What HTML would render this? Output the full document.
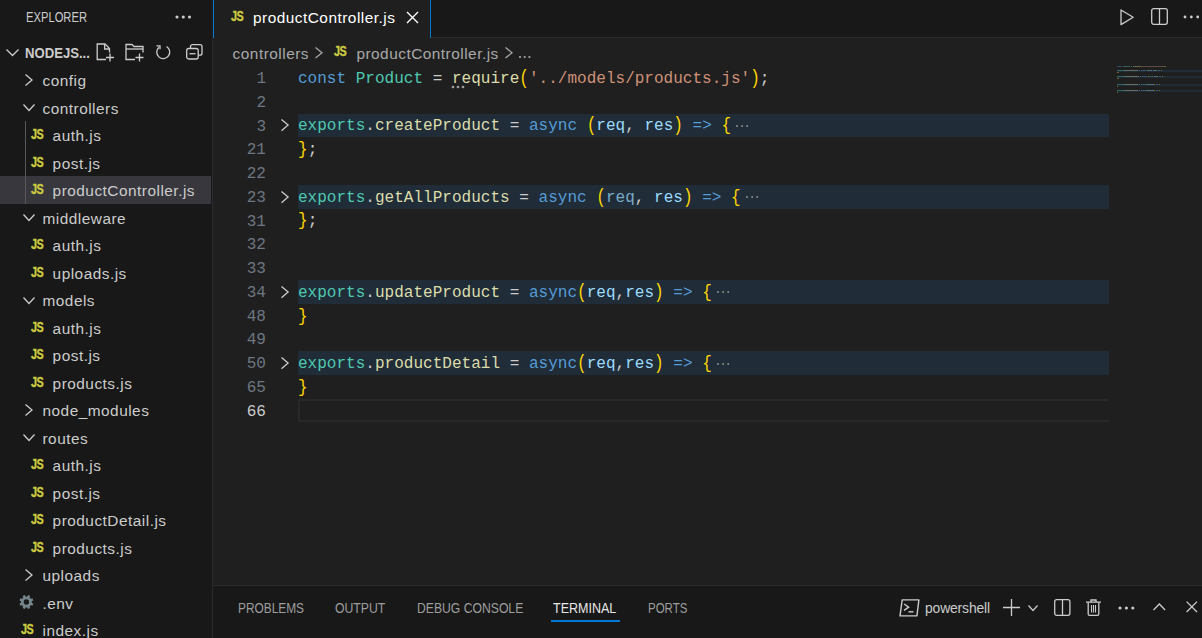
<!DOCTYPE html><html><head><meta charset="utf-8"><style>
*{margin:0;padding:0;box-sizing:border-box}
html,body{width:1202px;height:638px;overflow:hidden;background:#1f1f1f;font-family:"Liberation Sans",sans-serif}
.a{position:absolute}
.t{position:absolute;white-space:pre;color:#cccccc;font-size:15.4px;letter-spacing:0.49px;line-height:20px}
.js{position:absolute;font-weight:700;font-size:14.2px;color:#cbcb41;line-height:14px;letter-spacing:-0.6px;white-space:pre;transform:scaleX(0.76);transform-origin:0 0;-webkit-text-stroke:0.4px #cbcb41}
.cap{position:absolute;white-space:pre;transform-origin:0 0;line-height:14px}
.code{position:absolute;left:298px;white-space:pre;font-family:"Liberation Mono",monospace;font-size:16.04px;line-height:24px;color:#cccccc}
.ln{position:absolute;left:216px;width:50px;text-align:right;font-family:"Liberation Mono",monospace;font-size:16.04px;line-height:24px;color:#6e7681;white-space:pre}
.br{display:inline-block;transform:scaleY(1.22)}.bc{display:inline-block;transform:translateY(-0.5px) scaleY(1.16)}.k{color:#569cd6}.c{color:#4ec9b0}.f{color:#dcdcaa}.s{color:#ce9178}.v{color:#9cdcfe}.u{color:#9cdcfe;opacity:.72}.b{color:#ffd700}.p{color:#cccccc}
svg{position:absolute;overflow:visible}
.mm{position:absolute;height:1.2px}
</style></head><body>
<div class="a" style="left:0;top:0;width:212px;height:638px;background:#181818"></div>
<div class="a" style="left:212px;top:37px;width:1px;height:601px;background:#2b2b2b"></div>
<div class="a" style="left:213px;top:0;width:989px;height:37px;background:#181818"></div>
<div class="a" style="left:431px;top:37px;width:771px;height:1px;background:#2b2b2b"></div>
<div class="a" style="left:213px;top:0;width:218px;height:38px;background:#1f1f1f;border-left:1px solid #0078d4;border-right:1px solid #0078d4"></div>
<div class="a" style="left:213px;top:585px;width:989px;height:1px;background:#2b2b2b"></div>
<div class="a" style="left:213px;top:586px;width:989px;height:52px;background:#181818"></div>
<div class="cap" style="left:26px;top:10px;font-size:14px;color:#cccccc;transform:scaleX(0.8)">EXPLORER</div>
<svg style="left:174.7px;top:14.9px" width="16.5" height="4"><circle cx="2.0" cy="2" r="1.55" fill="#cccccc"/><circle cx="8.25" cy="2" r="1.55" fill="#cccccc"/><circle cx="14.5" cy="2" r="1.55" fill="#cccccc"/></svg>
<svg style="left:6px;top:49px" width="13" height="7"><path d="M0.5 0.5 L6.5 6.5 L12.5 0.5" fill="none" stroke="#cccccc" stroke-width="1.3"/></svg>
<div class="cap" style="left:25px;top:45.5px;font-size:14.5px;font-weight:700;color:#cccccc;transform:scaleX(0.905)">NODEJS...</div>
<svg style="left:96px;top:43px" width="19" height="19"><path d="M10 16.5 H1.2 V1 H9 L13.5 5.5 V9.5" fill="none" stroke="#cccccc" stroke-width="1.3"/><path d="M8.6 1 V6 H13.5" fill="none" stroke="#cccccc" stroke-width="1.3"/><path d="M14 10.5 V18.5 M10 14.5 H18" stroke="#cccccc" stroke-width="1.3"/></svg>
<svg style="left:125px;top:43px" width="20" height="19"><path d="M10 16.5 H1 V1.5 H7 L9 3.5 H18 V9.5" fill="none" stroke="#cccccc" stroke-width="1.3"/><path d="M1 6 H18" stroke="#cccccc" stroke-width="1.3"/><path d="M14.5 10.5 V18.5 M10.5 14.5 H18.5" stroke="#cccccc" stroke-width="1.3"/></svg>
<svg style="left:155px;top:45px" width="17" height="15"><path d="M4 2.2 A6.5 6.5 0 1 0 11.5 1.5" fill="none" stroke="#cccccc" stroke-width="1.3"/><path d="M1.5 0.8 H5 V4.3" fill="none" stroke="#cccccc" stroke-width="1.3"/></svg>
<svg style="left:186px;top:44px" width="17" height="16"><rect x="4.5" y="0.7" width="11.5" height="10.5" rx="2" fill="none" stroke="#cccccc" stroke-width="1.3"/><rect x="0.7" y="4.5" width="11.5" height="10.5" rx="2" fill="#181818" stroke="#cccccc" stroke-width="1.3"/><path d="M3.5 9.7 H9.5" stroke="#cccccc" stroke-width="1.3"/></svg>
<svg style="left:25.3px;top:73.95px" width="7.5" height="12"><path d="M0.5 0.5 L7.0 6.0 L0.5 11.5" fill="none" stroke="#cccccc" stroke-width="1.3"/></svg>
<div class="t" style="left:42.5px;top:71.45px">config</div>
<svg style="left:23px;top:104.05px" width="12" height="7"><path d="M0.5 0.5 L6.0 6.5 L11.5 0.5" fill="none" stroke="#cccccc" stroke-width="1.3"/></svg>
<div class="t" style="left:42.5px;top:98.95px">controllers</div>
<div class="js" style="left:30.6px;top:127.15px">JS</div>
<div class="t" style="left:52.6px;top:126.45px">auth.js</div>
<div class="js" style="left:30.6px;top:154.65px">JS</div>
<div class="t" style="left:52.6px;top:153.95px">post.js</div>
<div class="a" style="left:0;top:176.0px;width:211px;height:27.8px;background:#37373d"></div>
<div class="js" style="left:30.6px;top:182.15px">JS</div>
<div class="t" style="left:52.6px;top:181.45px">productController.js</div>
<svg style="left:23px;top:214.05px" width="12" height="7"><path d="M0.5 0.5 L6.0 6.5 L11.5 0.5" fill="none" stroke="#cccccc" stroke-width="1.3"/></svg>
<div class="t" style="left:42.5px;top:208.95px">middleware</div>
<div class="js" style="left:30.6px;top:237.15px">JS</div>
<div class="t" style="left:52.6px;top:236.45px">auth.js</div>
<div class="js" style="left:30.6px;top:264.65px">JS</div>
<div class="t" style="left:52.6px;top:263.95px">uploads.js</div>
<svg style="left:23px;top:296.55px" width="12" height="7"><path d="M0.5 0.5 L6.0 6.5 L11.5 0.5" fill="none" stroke="#cccccc" stroke-width="1.3"/></svg>
<div class="t" style="left:42.5px;top:291.45px">models</div>
<div class="js" style="left:30.6px;top:319.65px">JS</div>
<div class="t" style="left:52.6px;top:318.95px">auth.js</div>
<div class="js" style="left:30.6px;top:347.15px">JS</div>
<div class="t" style="left:52.6px;top:346.45px">post.js</div>
<div class="js" style="left:30.6px;top:374.65px">JS</div>
<div class="t" style="left:52.6px;top:373.95px">products.js</div>
<svg style="left:25.3px;top:403.95px" width="7.5" height="12"><path d="M0.5 0.5 L7.0 6.0 L0.5 11.5" fill="none" stroke="#cccccc" stroke-width="1.3"/></svg>
<div class="t" style="left:42.5px;top:401.45px">node_modules</div>
<svg style="left:23px;top:434.05px" width="12" height="7"><path d="M0.5 0.5 L6.0 6.5 L11.5 0.5" fill="none" stroke="#cccccc" stroke-width="1.3"/></svg>
<div class="t" style="left:42.5px;top:428.95px">routes</div>
<div class="js" style="left:30.6px;top:457.15px">JS</div>
<div class="t" style="left:52.6px;top:456.45px">auth.js</div>
<div class="js" style="left:30.6px;top:484.65px">JS</div>
<div class="t" style="left:52.6px;top:483.95px">post.js</div>
<div class="js" style="left:30.6px;top:512.15px">JS</div>
<div class="t" style="left:52.6px;top:511.45px">productDetail.js</div>
<div class="js" style="left:30.6px;top:539.65px">JS</div>
<div class="t" style="left:52.6px;top:538.95px">products.js</div>
<svg style="left:25.3px;top:568.95px" width="7.5" height="12"><path d="M0.5 0.5 L7.0 6.0 L0.5 11.5" fill="none" stroke="#cccccc" stroke-width="1.3"/></svg>
<div class="t" style="left:42.5px;top:566.45px">uploads</div>
<svg style="left:19.1px;top:590.1px" width="15" height="28"><g transform="translate(7.4 12.05)"><circle r="5.5" fill="#75868c"/><rect x="-1.2" y="-7.0" width="2.4" height="3.2" transform="rotate(22.5)" fill="#75868c"/><rect x="-1.2" y="-7.0" width="2.4" height="3.2" transform="rotate(67.5)" fill="#75868c"/><rect x="-1.2" y="-7.0" width="2.4" height="3.2" transform="rotate(112.5)" fill="#75868c"/><rect x="-1.2" y="-7.0" width="2.4" height="3.2" transform="rotate(157.5)" fill="#75868c"/><rect x="-1.2" y="-7.0" width="2.4" height="3.2" transform="rotate(202.5)" fill="#75868c"/><rect x="-1.2" y="-7.0" width="2.4" height="3.2" transform="rotate(247.5)" fill="#75868c"/><rect x="-1.2" y="-7.0" width="2.4" height="3.2" transform="rotate(292.5)" fill="#75868c"/><rect x="-1.2" y="-7.0" width="2.4" height="3.2" transform="rotate(337.5)" fill="#75868c"/><circle r="2.7" fill="#181818"/></g></svg>
<div class="t" style="left:42.5px;top:593.95px">.env</div>
<div class="js" style="left:20.8px;top:621.65px">JS</div>
<div class="t" style="left:42.5px;top:621.45px">index.js</div>
<div class="a" style="left:25px;top:121px;width:1px;height:83px;background:#585858"></div>
<div class="js" style="left:230.8px;top:9.3px">JS</div>
<div class="t" style="left:253px;top:8px;color:#ffffff">productController.js</div>
<svg style="left:406px;top:11px" width="13" height="13"><path d="M1 1 L12 12 M12 1 L1 12" stroke="#ffffff" stroke-width="1.4"/></svg>
<svg style="left:1119.6px;top:9px" width="15" height="17"><path d="M1 1 L13.2 8.3 L1 15.6 Z" fill="none" stroke="#cccccc" stroke-width="1.3" stroke-linejoin="round"/></svg>
<svg style="left:1151px;top:8px" width="17" height="17"><rect x="0.7" y="0.7" width="15.6" height="15.6" rx="2" fill="none" stroke="#cccccc" stroke-width="1.3"/><path d="M8.5 1 V16" stroke="#cccccc" stroke-width="1.3"/></svg>
<svg style="left:1182.8px;top:14.9px" width="16.7" height="4"><circle cx="2.0" cy="2" r="1.4" fill="#cccccc"/><circle cx="8.35" cy="2" r="1.4" fill="#cccccc"/><circle cx="14.7" cy="2" r="1.4" fill="#cccccc"/></svg>
<div class="t" style="left:232.6px;top:43.8px;color:#a9a9a9">controllers</div>
<svg style="left:314.8px;top:47.2px" width="7.5" height="11.5"><path d="M0.5 0.5 L7.0 5.75 L0.5 11.0" fill="none" stroke="#a9a9a9" stroke-width="1.25"/></svg>
<div class="js" style="left:334px;top:44.3px">JS</div>
<div class="t" style="left:356.4px;top:43.8px;color:#a9a9a9">productController.js</div>
<svg style="left:505px;top:47.2px" width="7.5" height="11.5"><path d="M0.5 0.5 L7.0 5.75 L0.5 11.0" fill="none" stroke="#a9a9a9" stroke-width="1.25"/></svg>
<svg style="left:517.6px;top:55.2px" width="13.4" height="4"><circle cx="2.0" cy="2" r="1.1" fill="#a9a9a9"/><circle cx="6.7" cy="2" r="1.1" fill="#a9a9a9"/><circle cx="11.4" cy="2" r="1.1" fill="#a9a9a9"/></svg>
<div class="ln" style="top:67.00px;color:#6e7681">1</div>
<div class="code" style="top:66.90px"><span class="k">const</span><span class="p"> </span><span class="c">Product</span><span class="p"> = </span><span class="f">require</span><span class="b br">(</span><span class="s">'../models/products.js'</span><span class="b br">)</span><span class="p">;</span></div>
<div class="mm" style="left:1117px;top:66.2px;width:5px;background:#569cd6;opacity:.38"></div>
<div class="mm" style="left:1123px;top:66.2px;width:7px;background:#4ec9b0;opacity:.38"></div>
<div class="mm" style="left:1131px;top:66.2px;width:1px;background:#cccccc;opacity:.38"></div>
<div class="mm" style="left:1133px;top:66.2px;width:7px;background:#dcdcaa;opacity:.38"></div>
<div class="mm" style="left:1140px;top:66.2px;width:1px;background:#ffd700;opacity:.38"></div>
<div class="mm" style="left:1141px;top:66.2px;width:23px;background:#ce9178;opacity:.38"></div>
<div class="mm" style="left:1164px;top:66.2px;width:1px;background:#ffd700;opacity:.38"></div>
<div class="mm" style="left:1165px;top:66.2px;width:1px;background:#cccccc;opacity:.38"></div>
<div class="ln" style="top:90.76px;color:#6e7681">2</div>
<div class="a" style="left:298px;top:113.52px;width:811px;height:23.76px;background:#202c38"></div>
<div class="a" style="left:1117px;top:70px;width:85px;height:2px;background:#202c38"></div>
<div class="ln" style="top:114.52px;color:#6e7681">3</div>
<svg style="left:281px;top:119.42000000000002px" width="7.6" height="12.2"><path d="M0.5 0.5 L7.1 6.1 L0.5 11.7" fill="none" stroke="#cccccc" stroke-width="1.3"/></svg>
<div class="code" style="top:114.42px"><span class="c">exports</span><span class="p">.</span><span class="f">createProduct</span><span class="p"> = </span><span class="k">async</span><span class="p"> </span><span class="b br">(</span><span class="v">req</span><span class="p">, </span><span class="v">res</span><span class="b br">)</span><span class="p"> </span><span class="k">=&gt;</span><span class="p"> </span><span class="b bc">{</span></div>
<svg style="left:735.425px;top:124.12px" width="14.2" height="4"><circle cx="2.0" cy="2" r="1.0" fill="#8c8c8c"/><circle cx="7.1" cy="2" r="1.0" fill="#8c8c8c"/><circle cx="12.2" cy="2" r="1.0" fill="#8c8c8c"/></svg>
<div class="mm" style="left:1117px;top:70.2px;width:7px;background:#4ec9b0;opacity:.38"></div>
<div class="mm" style="left:1124px;top:70.2px;width:1px;background:#cccccc;opacity:.38"></div>
<div class="mm" style="left:1125px;top:70.2px;width:13px;background:#dcdcaa;opacity:.38"></div>
<div class="mm" style="left:1139px;top:70.2px;width:1px;background:#cccccc;opacity:.38"></div>
<div class="mm" style="left:1141px;top:70.2px;width:5px;background:#569cd6;opacity:.38"></div>
<div class="mm" style="left:1147px;top:70.2px;width:1px;background:#ffd700;opacity:.38"></div>
<div class="mm" style="left:1148px;top:70.2px;width:3px;background:#9cdcfe;opacity:.38"></div>
<div class="mm" style="left:1151px;top:70.2px;width:1px;background:#cccccc;opacity:.38"></div>
<div class="mm" style="left:1153px;top:70.2px;width:3px;background:#9cdcfe;opacity:.38"></div>
<div class="mm" style="left:1156px;top:70.2px;width:1px;background:#ffd700;opacity:.38"></div>
<div class="mm" style="left:1158px;top:70.2px;width:2px;background:#569cd6;opacity:.38"></div>
<div class="mm" style="left:1161px;top:70.2px;width:1px;background:#ffd700;opacity:.38"></div>
<div class="ln" style="top:138.28px;color:#6e7681">21</div>
<div class="code" style="top:138.18px"><span class="b bc">}</span><span class="p">;</span></div>
<div class="mm" style="left:1117px;top:72.2px;width:1px;background:#ffd700;opacity:.38"></div>
<div class="mm" style="left:1118px;top:72.2px;width:1px;background:#cccccc;opacity:.38"></div>
<div class="ln" style="top:162.04px;color:#6e7681">22</div>
<div class="a" style="left:298px;top:184.80px;width:811px;height:23.76px;background:#202c38"></div>
<div class="a" style="left:1117px;top:76px;width:85px;height:2px;background:#202c38"></div>
<div class="ln" style="top:185.80px;color:#6e7681">23</div>
<svg style="left:281px;top:190.70000000000002px" width="7.6" height="12.2"><path d="M0.5 0.5 L7.1 6.1 L0.5 11.7" fill="none" stroke="#cccccc" stroke-width="1.3"/></svg>
<div class="code" style="top:185.70px"><span class="c">exports</span><span class="p">.</span><span class="f">getAllProducts</span><span class="p"> = </span><span class="k">async</span><span class="p"> </span><span class="b br">(</span><span class="u">req</span><span class="p">, </span><span class="v">res</span><span class="b br">)</span><span class="p"> </span><span class="k">=&gt;</span><span class="p"> </span><span class="b bc">{</span></div>
<svg style="left:745.05px;top:195.4px" width="14.2" height="4"><circle cx="2.0" cy="2" r="1.0" fill="#8c8c8c"/><circle cx="7.1" cy="2" r="1.0" fill="#8c8c8c"/><circle cx="12.2" cy="2" r="1.0" fill="#8c8c8c"/></svg>
<div class="mm" style="left:1117px;top:76.2px;width:7px;background:#4ec9b0;opacity:.38"></div>
<div class="mm" style="left:1124px;top:76.2px;width:1px;background:#cccccc;opacity:.38"></div>
<div class="mm" style="left:1125px;top:76.2px;width:14px;background:#dcdcaa;opacity:.38"></div>
<div class="mm" style="left:1140px;top:76.2px;width:1px;background:#cccccc;opacity:.38"></div>
<div class="mm" style="left:1142px;top:76.2px;width:5px;background:#569cd6;opacity:.38"></div>
<div class="mm" style="left:1148px;top:76.2px;width:1px;background:#ffd700;opacity:.38"></div>
<div class="mm" style="left:1149px;top:76.2px;width:3px;background:#6a8fa5;opacity:.38"></div>
<div class="mm" style="left:1152px;top:76.2px;width:1px;background:#cccccc;opacity:.38"></div>
<div class="mm" style="left:1154px;top:76.2px;width:3px;background:#9cdcfe;opacity:.38"></div>
<div class="mm" style="left:1157px;top:76.2px;width:1px;background:#ffd700;opacity:.38"></div>
<div class="mm" style="left:1159px;top:76.2px;width:2px;background:#569cd6;opacity:.38"></div>
<div class="mm" style="left:1162px;top:76.2px;width:1px;background:#ffd700;opacity:.38"></div>
<div class="ln" style="top:209.56px;color:#6e7681">31</div>
<div class="code" style="top:209.46px"><span class="b bc">}</span><span class="p">;</span></div>
<div class="mm" style="left:1117px;top:78.2px;width:1px;background:#ffd700;opacity:.38"></div>
<div class="mm" style="left:1118px;top:78.2px;width:1px;background:#cccccc;opacity:.38"></div>
<div class="ln" style="top:233.32px;color:#6e7681">32</div>
<div class="ln" style="top:257.08px;color:#6e7681">33</div>
<div class="a" style="left:298px;top:279.84px;width:811px;height:23.76px;background:#202c38"></div>
<div class="a" style="left:1117px;top:84px;width:85px;height:2px;background:#202c38"></div>
<div class="ln" style="top:280.84px;color:#6e7681">34</div>
<svg style="left:281px;top:285.74px" width="7.6" height="12.2"><path d="M0.5 0.5 L7.1 6.1 L0.5 11.7" fill="none" stroke="#cccccc" stroke-width="1.3"/></svg>
<div class="code" style="top:280.74px"><span class="c">exports</span><span class="p">.</span><span class="f">updateProduct</span><span class="p"> = </span><span class="k">async</span><span class="b br">(</span><span class="v">req</span><span class="p">,</span><span class="v">res</span><span class="b br">)</span><span class="p"> </span><span class="k">=&gt;</span><span class="p"> </span><span class="b bc">{</span></div>
<svg style="left:716.175px;top:290.44000000000005px" width="14.2" height="4"><circle cx="2.0" cy="2" r="1.0" fill="#8c8c8c"/><circle cx="7.1" cy="2" r="1.0" fill="#8c8c8c"/><circle cx="12.2" cy="2" r="1.0" fill="#8c8c8c"/></svg>
<div class="mm" style="left:1117px;top:84.2px;width:7px;background:#4ec9b0;opacity:.38"></div>
<div class="mm" style="left:1124px;top:84.2px;width:1px;background:#cccccc;opacity:.38"></div>
<div class="mm" style="left:1125px;top:84.2px;width:13px;background:#dcdcaa;opacity:.38"></div>
<div class="mm" style="left:1139px;top:84.2px;width:1px;background:#cccccc;opacity:.38"></div>
<div class="mm" style="left:1141px;top:84.2px;width:5px;background:#569cd6;opacity:.38"></div>
<div class="mm" style="left:1146px;top:84.2px;width:1px;background:#ffd700;opacity:.38"></div>
<div class="mm" style="left:1147px;top:84.2px;width:3px;background:#9cdcfe;opacity:.38"></div>
<div class="mm" style="left:1150px;top:84.2px;width:1px;background:#cccccc;opacity:.38"></div>
<div class="mm" style="left:1151px;top:84.2px;width:3px;background:#9cdcfe;opacity:.38"></div>
<div class="mm" style="left:1154px;top:84.2px;width:1px;background:#ffd700;opacity:.38"></div>
<div class="mm" style="left:1156px;top:84.2px;width:2px;background:#569cd6;opacity:.38"></div>
<div class="mm" style="left:1159px;top:84.2px;width:1px;background:#ffd700;opacity:.38"></div>
<div class="ln" style="top:304.60px;color:#6e7681">48</div>
<div class="code" style="top:304.50px"><span class="b bc">}</span></div>
<div class="mm" style="left:1117px;top:86.2px;width:1px;background:#ffd700;opacity:.38"></div>
<div class="ln" style="top:328.36px;color:#6e7681">49</div>
<div class="a" style="left:298px;top:351.12px;width:811px;height:23.76px;background:#202c38"></div>
<div class="a" style="left:1117px;top:90px;width:85px;height:2px;background:#202c38"></div>
<div class="ln" style="top:352.12px;color:#6e7681">50</div>
<svg style="left:281px;top:357.02px" width="7.6" height="12.2"><path d="M0.5 0.5 L7.1 6.1 L0.5 11.7" fill="none" stroke="#cccccc" stroke-width="1.3"/></svg>
<div class="code" style="top:352.02px"><span class="c">exports</span><span class="p">.</span><span class="f">productDetail</span><span class="p"> = </span><span class="k">async</span><span class="b br">(</span><span class="v">req</span><span class="p">,</span><span class="v">res</span><span class="b br">)</span><span class="p"> </span><span class="k">=&gt;</span><span class="p"> </span><span class="b bc">{</span></div>
<svg style="left:716.175px;top:361.72px" width="14.2" height="4"><circle cx="2.0" cy="2" r="1.0" fill="#8c8c8c"/><circle cx="7.1" cy="2" r="1.0" fill="#8c8c8c"/><circle cx="12.2" cy="2" r="1.0" fill="#8c8c8c"/></svg>
<div class="mm" style="left:1117px;top:90.2px;width:7px;background:#4ec9b0;opacity:.38"></div>
<div class="mm" style="left:1124px;top:90.2px;width:1px;background:#cccccc;opacity:.38"></div>
<div class="mm" style="left:1125px;top:90.2px;width:13px;background:#dcdcaa;opacity:.38"></div>
<div class="mm" style="left:1139px;top:90.2px;width:1px;background:#cccccc;opacity:.38"></div>
<div class="mm" style="left:1141px;top:90.2px;width:5px;background:#569cd6;opacity:.38"></div>
<div class="mm" style="left:1146px;top:90.2px;width:1px;background:#ffd700;opacity:.38"></div>
<div class="mm" style="left:1147px;top:90.2px;width:3px;background:#9cdcfe;opacity:.38"></div>
<div class="mm" style="left:1150px;top:90.2px;width:1px;background:#cccccc;opacity:.38"></div>
<div class="mm" style="left:1151px;top:90.2px;width:3px;background:#9cdcfe;opacity:.38"></div>
<div class="mm" style="left:1154px;top:90.2px;width:1px;background:#ffd700;opacity:.38"></div>
<div class="mm" style="left:1156px;top:90.2px;width:2px;background:#569cd6;opacity:.38"></div>
<div class="mm" style="left:1159px;top:90.2px;width:1px;background:#ffd700;opacity:.38"></div>
<div class="ln" style="top:375.88px;color:#6e7681">65</div>
<div class="code" style="top:375.78px"><span class="b bc">}</span></div>
<div class="mm" style="left:1117px;top:92.2px;width:1px;background:#ffd700;opacity:.38"></div>
<div class="a" style="left:298px;top:399.24px;width:811px;height:22.8px;border:2px solid #282828;border-right:none"></div>
<div class="ln" style="top:399.64px;color:#cccccc">66</div>
<svg style="left:451.4px;top:85.2px" width="14.0" height="4"><circle cx="2.0" cy="2" r="1.35" fill="#a0a0a0"/><circle cx="7.0" cy="2" r="1.35" fill="#a0a0a0"/><circle cx="12.0" cy="2" r="1.35" fill="#a0a0a0"/></svg>
<div class="cap" style="left:238px;top:601px;font-size:14px;color:#9d9d9d;transform:scaleX(0.848)">PROBLEMS</div>
<div class="cap" style="left:335.4px;top:601px;font-size:14px;color:#9d9d9d;transform:scaleX(0.874)">OUTPUT</div>
<div class="cap" style="left:416.6px;top:601px;font-size:14px;color:#9d9d9d;transform:scaleX(0.87)">DEBUG CONSOLE</div>
<div class="cap" style="left:553.4px;top:601px;font-size:14px;color:#e7e7e7;transform:scaleX(0.894)">TERMINAL</div>
<div class="cap" style="left:647.6px;top:601px;font-size:14px;color:#9d9d9d;transform:scaleX(0.821)">PORTS</div>
<div class="a" style="left:551px;top:620px;width:69px;height:2px;background:#0078d4"></div>
<svg style="left:899px;top:599px" width="21" height="18"><path d="M3.2 0.9 H19.9 L17.9 16.9 H1.0 Z" fill="none" stroke="#cccccc" stroke-width="1.4" stroke-linejoin="round"/><path d="M5.2 5 L9.6 8.2 L5 11.3" fill="none" stroke="#cccccc" stroke-width="1.4"/><path d="M9.5 12.8 H14.5" stroke="#cccccc" stroke-width="1.4"/></svg>
<div class="t" style="left:925px;top:598px;font-size:13.9px;letter-spacing:-0.15px">powershell</div>
<svg style="left:1003px;top:599px" width="17" height="17"><path d="M8.5 0 V17 M0 8.5 H17" stroke="#cccccc" stroke-width="1.3"/></svg>
<svg style="left:1028px;top:605px" width="10" height="6"><path d="M0.5 0.5 L5.0 5.5 L9.5 0.5" fill="none" stroke="#cccccc" stroke-width="1.2"/></svg>
<svg style="left:1053.5px;top:599px" width="17" height="17"><rect x="0.7" y="0.7" width="15.2" height="15.6" rx="2" fill="none" stroke="#cccccc" stroke-width="1.3"/><path d="M8.5 1 V16" stroke="#cccccc" stroke-width="1.3"/></svg>
<svg style="left:1086px;top:599px" width="15" height="17"><path d="M0 3.2 H15 M5 3 V1 H10 V3" fill="none" stroke="#cccccc" stroke-width="1.3"/><path d="M2.2 3.5 V15 Q2.2 16.3 3.5 16.3 H11.5 Q12.8 16.3 12.8 15 V3.5" fill="none" stroke="#cccccc" stroke-width="1.3"/><path d="M5.5 6 V13.5 M7.5 6 V13.5 M9.5 6 V13.5" stroke="#cccccc" stroke-width="1.1"/></svg>
<svg style="left:1117.5px;top:605.8px" width="16.8" height="4"><circle cx="2.0" cy="2" r="1.55" fill="#cccccc"/><circle cx="8.4" cy="2" r="1.55" fill="#cccccc"/><circle cx="14.8" cy="2" r="1.55" fill="#cccccc"/></svg>
<svg style="left:1152.5px;top:602.5px" width="13" height="8"><path d="M0.5 7 L6.3 1 L12.1 7" fill="none" stroke="#cccccc" stroke-width="1.3"/></svg>
<svg style="left:1185.5px;top:601px" width="12" height="12"><path d="M0.6 0.6 L11 11 M11 0.6 L0.6 11" stroke="#cccccc" stroke-width="1.3"/></svg>
</body></html>
